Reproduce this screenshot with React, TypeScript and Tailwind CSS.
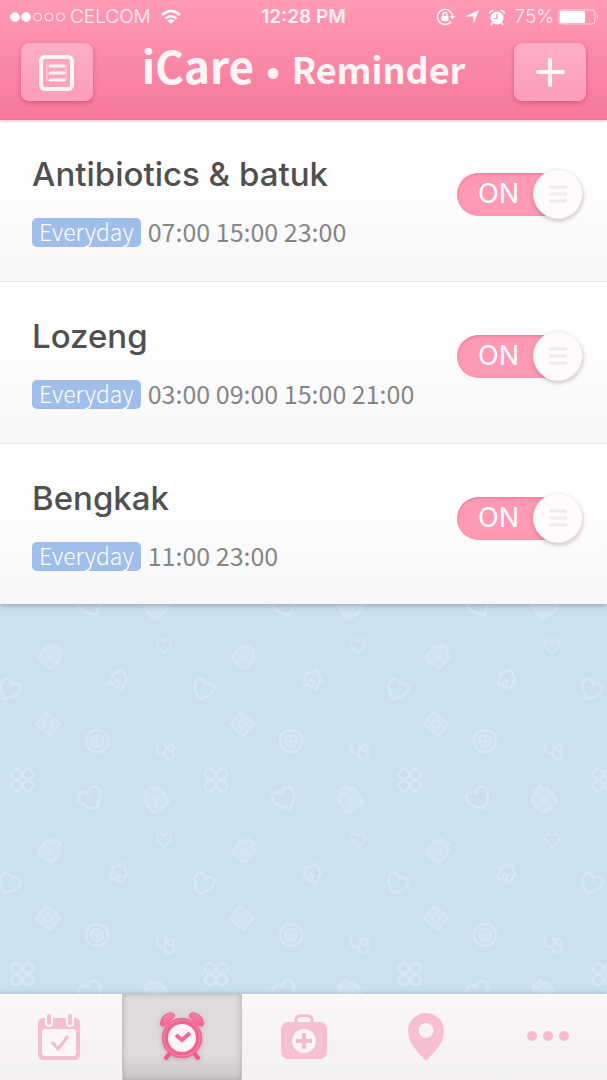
import { useState } from "react";

const reminders = [
  { id: "antibiotics", name: "Antibiotics & batuk", repeat: "Everyday", times: ["07:00", "15:00", "23:00"] },
  { id: "lozeng", name: "Lozeng", repeat: "Everyday", times: ["03:00", "09:00", "15:00", "21:00"] },
  { id: "bengkak", name: "Bengkak", repeat: "Everyday", times: ["11:00", "23:00"] },
];

const tabs = [
  { id: "calendar", label: "Calendar", Icon: CalendarIcon },
  { id: "reminder", label: "Reminder", Icon: AlarmIcon },
  { id: "kit", label: "Medical kit", Icon: KitIcon },
  { id: "places", label: "Places", Icon: PinIcon },
  { id: "more", label: "More", Icon: MoreIcon },
];

function CalendarIcon() {
  return (
    <svg width="44" height="48" viewBox="0 0 44 48" fill="none">
      <rect x="1" y="5" width="42" height="42" rx="5" fill="#f6bfd1" />
      <rect x="5" y="16" width="34" height="27" rx="3" fill="#fbf7f8" />
      <rect x="8" y="0" width="8" height="14" rx="4" fill="#fbf7f8" />
      <rect x="29" y="0" width="8" height="14" rx="4" fill="#fbf7f8" />
      <rect x="10" y="1" width="4" height="11" rx="2" fill="#f6bfd1" />
      <rect x="31" y="1" width="4" height="11" rx="2" fill="#f6bfd1" />
      <path d="M15 29l6 7 10-13" stroke="#f3bccd" strokeWidth="3" />
    </svg>
  );
}

function AlarmIcon() {
  return (
    <svg width="46" height="52" viewBox="0 0 46 52" fill="none" className="drop-shadow-[0_1px_2px_rgba(190,90,130,0.5)]">
      <defs>
        <linearGradient id="alarm" x1="0" y1="0" x2="0" y2="1">
          <stop offset="0" stopColor="#f784aa" />
          <stop offset="1" stopColor="#f4608f" />
        </linearGradient>
      </defs>
      <path d="M11 42l-4 5M35 42l4 5" stroke="#f0588b" strokeWidth="4" strokeLinecap="round" />
      <path d="M2 14C0 8 7 1 13 2q4 1 2 4L6 14q-3 2-4 0z" fill="url(#alarm)" stroke="#ee5c8b" strokeLinejoin="round" />
      <path d="M44 14C46 8 39 1 33 2q-4 1-2 4l9 8q3 2 4 0z" fill="url(#alarm)" stroke="#ee5c8b" strokeLinejoin="round" />
      <circle cx="23" cy="27" r="17" fill="#fff4f7" stroke="#f16393" strokeWidth="6" />
      <circle cx="23" cy="27" r="18" stroke="#f78cae" strokeWidth="1" />
      <path d="M17 24l6 5 8-7" stroke="#ef6b96" strokeWidth="4" />
    </svg>
  );
}

function KitIcon() {
  return (
    <svg width="48" height="46" viewBox="0 0 48 46" fill="none">
      <path d="M16 8V5q0-2 3-3 5-1 10 0 3 1 3 3v3" stroke="#f4bed0" strokeWidth="3" />
      <rect x="1" y="8" width="46" height="37" rx="7" fill="#f6bfd2" />
      <circle cx="24" cy="27" r="12" fill="#fbf5f8" />
      <path d="M24 19v16M16 27h16" stroke="#f4bacf" strokeWidth="4" />
    </svg>
  );
}

function PinIcon() {
  return (
    <svg width="38" height="50" viewBox="0 0 38 50">
      <path
        fillRule="evenodd"
        d="M19 1C9 1 1 9 1 19c0 12 9 20 15 27 2 3 4 3 6 0 6-7 15-15 15-27C37 9 29 1 19 1zM19 11a7 7 0 1 1 0 15 7 7 0 1 1 0-15z"
        fill="#f6bfd2"
      />
    </svg>
  );
}

function MoreIcon() {
  return (
    <svg width="44" height="12" viewBox="0 0 44 12" fill="#f6bacf">
      <circle cx="6" cy="5" r="5" />
      <circle cx="22" cy="5" r="5" />
      <circle cx="38" cy="5" r="5" />
    </svg>
  );
}

function StatusBar() {
  return (
    <div className="grid h-[34px] grid-cols-[1fr_auto_1fr] items-center px-2 font-['Inter',sans-serif] text-[19px] text-[#fff1f5]">
      <div className="flex items-center gap-1">
        <svg width="58" height="12" viewBox="0 0 58 12" fill="none" stroke="#fff1f5">
          <circle cx="7" cy="6" r="4.5" fill="#fff" />
          <circle cx="18" cy="6" r="4.5" fill="#fff" />
          <circle cx="29.5" cy="6" r="4" />
          <circle cx="41" cy="6" r="4" />
          <circle cx="52.5" cy="6" r="4" />
        </svg>
        <span className="font-light">CELCOM</span>
        <svg width="24" height="18" viewBox="0 0 24 18" fill="none" stroke="#fff" strokeWidth="2.4" className="ml-1">
          <path d="M3 7Q12-1 21 7M6.500 10.500Q12 6 17.500 10.500" />
          <path d="M8.500 12.500Q12 10 15.500 12.500L12 16z" fill="#fff" stroke="none" />
        </svg>
      </div>
      <span className="font-semibold">12:28 PM</span>
      <div className="flex items-center justify-end gap-2">
        <svg width="20" height="18" viewBox="0 0 20 18" fill="none" stroke="#fff">
          <path d="M15 13.500A7.500 7.500 0 1 1 16.500 8.500" strokeWidth="1.300" />
          <path d="M14 8h5l-2.500 3.500z" fill="#fff" stroke="none" />
          <rect x="5.500" y="8" width="7" height="5" rx="0.500" fill="#fff" stroke="none" />
          <path d="M7 8V6.500a2 2 0 0 1 4 0V8" strokeWidth="1.300" />
        </svg>
        <svg width="16" height="16" viewBox="0 0 16 16" fill="#fff">
          <path d="M15 1L9.500 15V7.500H1z" />
        </svg>
        <svg width="18" height="17" viewBox="0 0 18 17" fill="none" stroke="#fff">
          <circle cx="9" cy="9" r="6.500" fill="#fff" stroke="none" />
          <path d="M1.500 4.500Q2 1.500 5.500 1.200M16.500 4.500Q16 1.500 12.500 1.200M4.500 14l-1.500 2M13.500 14l1.500 2" strokeWidth="1.500" />
          <path d="M9 5v4.500H6" stroke="#f98fae" strokeWidth="1.200" />
        </svg>
        <div className="flex items-center gap-1">
          <span className="font-light">75%</span>
          <svg width="41" height="16" viewBox="0 0 41 16" fill="none">
            <rect x="1" y="1" width="36" height="14" rx="3" stroke="#ffdbe5" />
            <rect x="2" y="2" width="25" height="12" rx="1.5" fill="#fff" />
            <path d="M39 5q2 3 0 6z" fill="#ffdbe5" />
          </svg>
        </div>
      </div>
    </div>
  );
}

function HeaderButton({ label, children }: { label: string; children: React.ReactNode }) {
  return (
    <button
      aria-label={label}
      className="grid h-[58px] w-[72px] place-items-center rounded-lg border border-[#ffa9c0] bg-linear-to-b from-[#fdafc5] to-[#fc9cb8] shadow-[0_2px_5px_rgba(214,62,108,0.65)]"
    >
      {children}
    </button>
  );
}

function Header() {
  return (
    <header className="relative z-10 h-[120px] border-b border-[#ee7295] bg-linear-to-b from-[#ff9ab5] to-[#f6789b] shadow-[0_1px_3px_rgba(240,120,155,0.5)]">
      <StatusBar />
      <div className="mt-2 flex items-center justify-between px-[21px]">
        <HeaderButton label="Reminder list">
          <svg width="38" height="38" viewBox="0 0 38 38" fill="none" stroke="#fff5f7">
            <rect x="3" y="4" width="31" height="32" rx="4" strokeWidth="4" />
            <path d="M12 13h14M12 20h14M12 27h14" strokeWidth="3" strokeLinecap="round" />
            <path d="M9 12v16M28 12v16" stroke="#fdd3df" strokeWidth="1" />
          </svg>
        </HeaderButton>
        <h1 className="flex items-baseline pb-[10px] font-['Noto_Sans_CJK_JP','Open_Sans',sans-serif] leading-[46px] font-bold text-[#fff5f7]">
          <span className="text-[44px]">iCare</span>
          <span className="px-3 text-4xl leading-[46px]">•</span>
          <span className="text-4xl leading-[46px]">Reminder</span>
        </h1>
        <HeaderButton label="Add reminder">
          <svg width="32" height="32" viewBox="0 0 32 32" stroke="#fff8fa" strokeWidth="4" strokeLinecap="round">
            <path d="M16 4v25M4 16h25" />
          </svg>
        </HeaderButton>
      </div>
    </header>
  );
}

function Toggle({ label }: { label: string }) {
  const [on, setOn] = useState(true);

  return (
    <label className={`relative flex h-[50px] w-[126px] shrink-0 cursor-pointer items-center ${on ? "justify-end" : "justify-start"}`}>
      <input
        type="checkbox"
        className="sr-only"
        aria-label={label}
        checked={on}
        onChange={(e) => setOn(e.target.checked)}
      />
      <span
        className={`absolute inset-x-0 top-1 flex h-[43px] items-center rounded-full px-[21px] font-['Inter',sans-serif] text-[27px] text-white shadow-[inset_0_1px_3px_rgba(205,80,120,0.5)] ${
          on ? "bg-[#ff9ab5]" : "justify-end bg-gray-300"
        }`}
      >
        {on ? "ON" : "OFF"}
      </span>
      <span className="relative grid size-[50px] place-items-center rounded-full border border-[#f5eff0] bg-[#fffafb] shadow-[0_2px_4px_rgba(90,60,70,0.3)]">
        <svg width="20" height="20" viewBox="0 0 20 20" stroke="#f1eaec" strokeWidth="3">
          <path d="M1 3h18M1 10h18M1 17h18" />
        </svg>
      </span>
    </label>
  );
}

// The tile repeats every 194px in both directions
function PatternBackground() {
  return (
    <svg className="block h-full w-full" aria-hidden="true">
      <defs>
        <path id="heart" d="M0 10C-5 6-10 2-10-4c0-6 7-7 10-2 3-5 10-4 10 2C10 2 5 6 0 10z" />
        <g id="kit">
          <rect x="-9" y="-8" width="18" height="17" rx="3" />
          <path d="M-4-8v-4h8v4M0-4v9M-4 0h9M-5 5h3" />
        </g>
        <g id="house">
          <path d="M-10 0L0-10 10 0M-7-2v10H7V-2M-2 8V2h4v6" />
        </g>
        <pattern id="medical" width="194" height="194" patternUnits="userSpaceOnUse">
          <g fill="none" stroke="#d8eaf4" strokeWidth="2.5" opacity="0.7">
            <use href="#kit" fill="#d2e6f1" transform="translate(50 53) rotate(38)" />
            <use href="#heart" transform="translate(164 42) scale(.7)" />
            <use href="#house" transform="translate(119 75) rotate(25)" />
            <use href="#heart" transform="translate(9 86) rotate(25)" />
            <use href="#heart" transform="translate(203 86) rotate(25)" />
            <g fill="#d2e6f1" transform="translate(48 120) rotate(40)">
              <rect x="-9" y="-8" width="18" height="16" rx="2" />
              <circle r="4" />
            </g>
            <g transform="translate(97 137)">
              <circle r="11" />
              <circle r="6" />
              <path d="M0-4v8M-4 0h8" />
            </g>
            <path d="M157 139v6q1 6 7 3 4-3 1-9M164 149q2 9 8 5 4-3 0-8" />
            <circle cx="171" cy="144" r="3" />
            <g transform="translate(22 176)">
              <circle cx="-6" cy="-6" r="5" />
              <circle cx="6" cy="-6" r="5" />
              <circle cx="-6" cy="6" r="5" />
              <circle cx="6" cy="6" r="5" />
              <path d="M-4 0L0-4 4 0 0 4z" />
            </g>
            <use href="#heart" transform="translate(91 1) rotate(-28) scale(1.1)" />
            <use href="#heart" transform="translate(91 195) rotate(-28) scale(1.1)" />
            <use href="#kit" fill="#d2e6f1" transform="translate(156 2) rotate(-35) scale(1.1)" />
            <use href="#kit" fill="#d2e6f1" transform="translate(156 196) rotate(-35) scale(1.1)" />
          </g>
        </pattern>
      </defs>
      <rect width="100%" height="100%" fill="url(#medical)" />
    </svg>
  );
}

export default function App() {
  const [active, setActive] = useState("reminder");

  return (
    <div className="flex h-screen flex-col overflow-hidden bg-[#cae0ee]">
      <Header />

      <ul className="relative z-0 shadow-[0_2px_6px_rgba(80,110,130,0.45)]">
        {reminders.map((r) => (
          <li
            key={r.id}
            className="flex items-start justify-between border-b border-[#e8e8e8] bg-linear-to-b from-white from-30% to-[#f7f7f7] pt-[33px] pr-6 pb-[34px] pl-8 last:border-b-0 last:pb-[33px]"
          >
            <div>
              <h2 className="font-['Inter',sans-serif] text-[33px] leading-[42px] font-medium text-[#505050]">{r.name}</h2>
              <p className="mt-[23px] flex h-[29px] items-center gap-[7px] font-['Noto_Sans_CJK_JP','Open_Sans',sans-serif] text-[25px] leading-[26px] text-[#868686]">
                <span className="h-[29px] rounded-[5px] bg-[#9fbee9] px-[7px] text-[23px] leading-[26px] font-light text-white">{r.repeat}</span>
                <span className="h-[29px]">{r.times.join(" ")}</span>
              </p>
            </div>
            <div className="pt-4">
              <Toggle label={r.name} />
            </div>
          </li>
        ))}
      </ul>

      <main className="min-h-0 flex-1">
        <PatternBackground />
      </main>

      <nav className="relative flex h-[86px] shrink-0 gap-1 border-t-2 border-white bg-linear-to-b from-[#fbf7f8] to-[#f4f1f1] shadow-[0_-1px_4px_rgba(80,110,130,0.3)]">
        {tabs.map(({ id, label, Icon }) => (
          <button
            key={id}
            aria-label={label}
            onClick={() => setActive(id)}
            className={`-mt-[2px] grid flex-1 place-items-center ${
              active === id
                ? "border-x border-[#c9c4c5] bg-linear-to-b from-[#dfdadb] from-70% to-[#cbc6c6] shadow-[inset_0_0_5px_rgba(120,110,112,0.4)]"
                : ""
            }`}
          >
            <Icon />
          </button>
        ))}
      </nav>
    </div>
  );
}
